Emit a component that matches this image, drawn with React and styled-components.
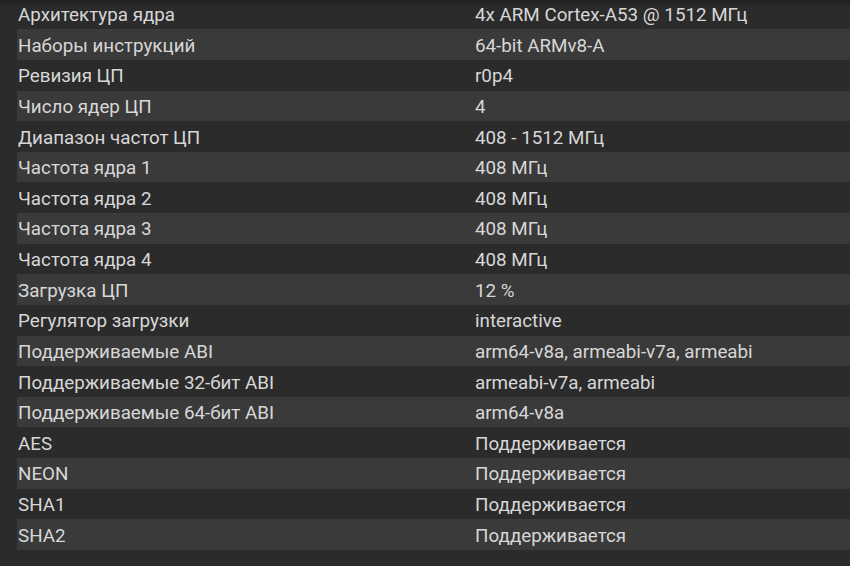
import React from "react";
import styled, { createGlobalStyle } from "styled-components";

const Global = createGlobalStyle`
  html, body { margin: 0; padding: 0; background: #2b2b2b; }
  body { width: 850px; height: 566px; overflow: hidden; font-family: Roboto, "Noto Sans", sans-serif; }
`;

const Page = styled.div`
  width: 850px;
  height: 566px;
  background: linear-gradient(to bottom, #202020 0px, #2b2b2b 8px, #2b2b2b 100%);
  padding-left: 17px;
  box-sizing: border-box;
  overflow: hidden;
`;

const Table = styled.div`
  display: flex;
  flex-direction: column;
  margin-top: -1.3px;
`;

const Row = styled.div`
  display: grid;
  grid-template-columns: 457px 1fr;
  align-items: center;
  height: 30.63px;
  background: ${(p) => (p.$alt ? "#3a3a3a" : "transparent")};
`;

const Cell = styled.div`
  font-size: 18.8px;
  color: #d7d7d7;
  padding-left: 1px;
  padding-top: 3px;
  white-space: nowrap;
  line-height: 1;
`;

const rows = [
  ["Архитектура ядра", "4x ARM Cortex-A53 @ 1512 МГц"],
  ["Наборы инструкций", "64-bit ARMv8-A"],
  ["Ревизия ЦП", "r0p4"],
  ["Число ядер ЦП", "4"],
  ["Диапазон частот ЦП", "408 - 1512 МГц"],
  ["Частота ядра 1", "408 МГц"],
  ["Частота ядра 2", "408 МГц"],
  ["Частота ядра 3", "408 МГц"],
  ["Частота ядра 4", "408 МГц"],
  ["Загрузка ЦП", "12 %"],
  ["Регулятор загрузки", "interactive"],
  ["Поддерживаемые ABI", "arm64-v8a, armeabi-v7a, armeabi"],
  ["Поддерживаемые 32-бит ABI", "armeabi-v7a, armeabi"],
  ["Поддерживаемые 64-бит ABI", "arm64-v8a"],
  ["AES", "Поддерживается"],
  ["NEON", "Поддерживается"],
  ["SHA1", "Поддерживается"],
  ["SHA2", "Поддерживается"],
];

export default function App() {
  return (
    <>
      <Global />
      <Page>
        <Table>
          {rows.map(([k, v], i) => (
            <Row key={k} $alt={i % 2 === 1}>
              <Cell>{k}</Cell>
              <Cell>{v}</Cell>
            </Row>
          ))}
        </Table>
      </Page>
    </>
  );
}
